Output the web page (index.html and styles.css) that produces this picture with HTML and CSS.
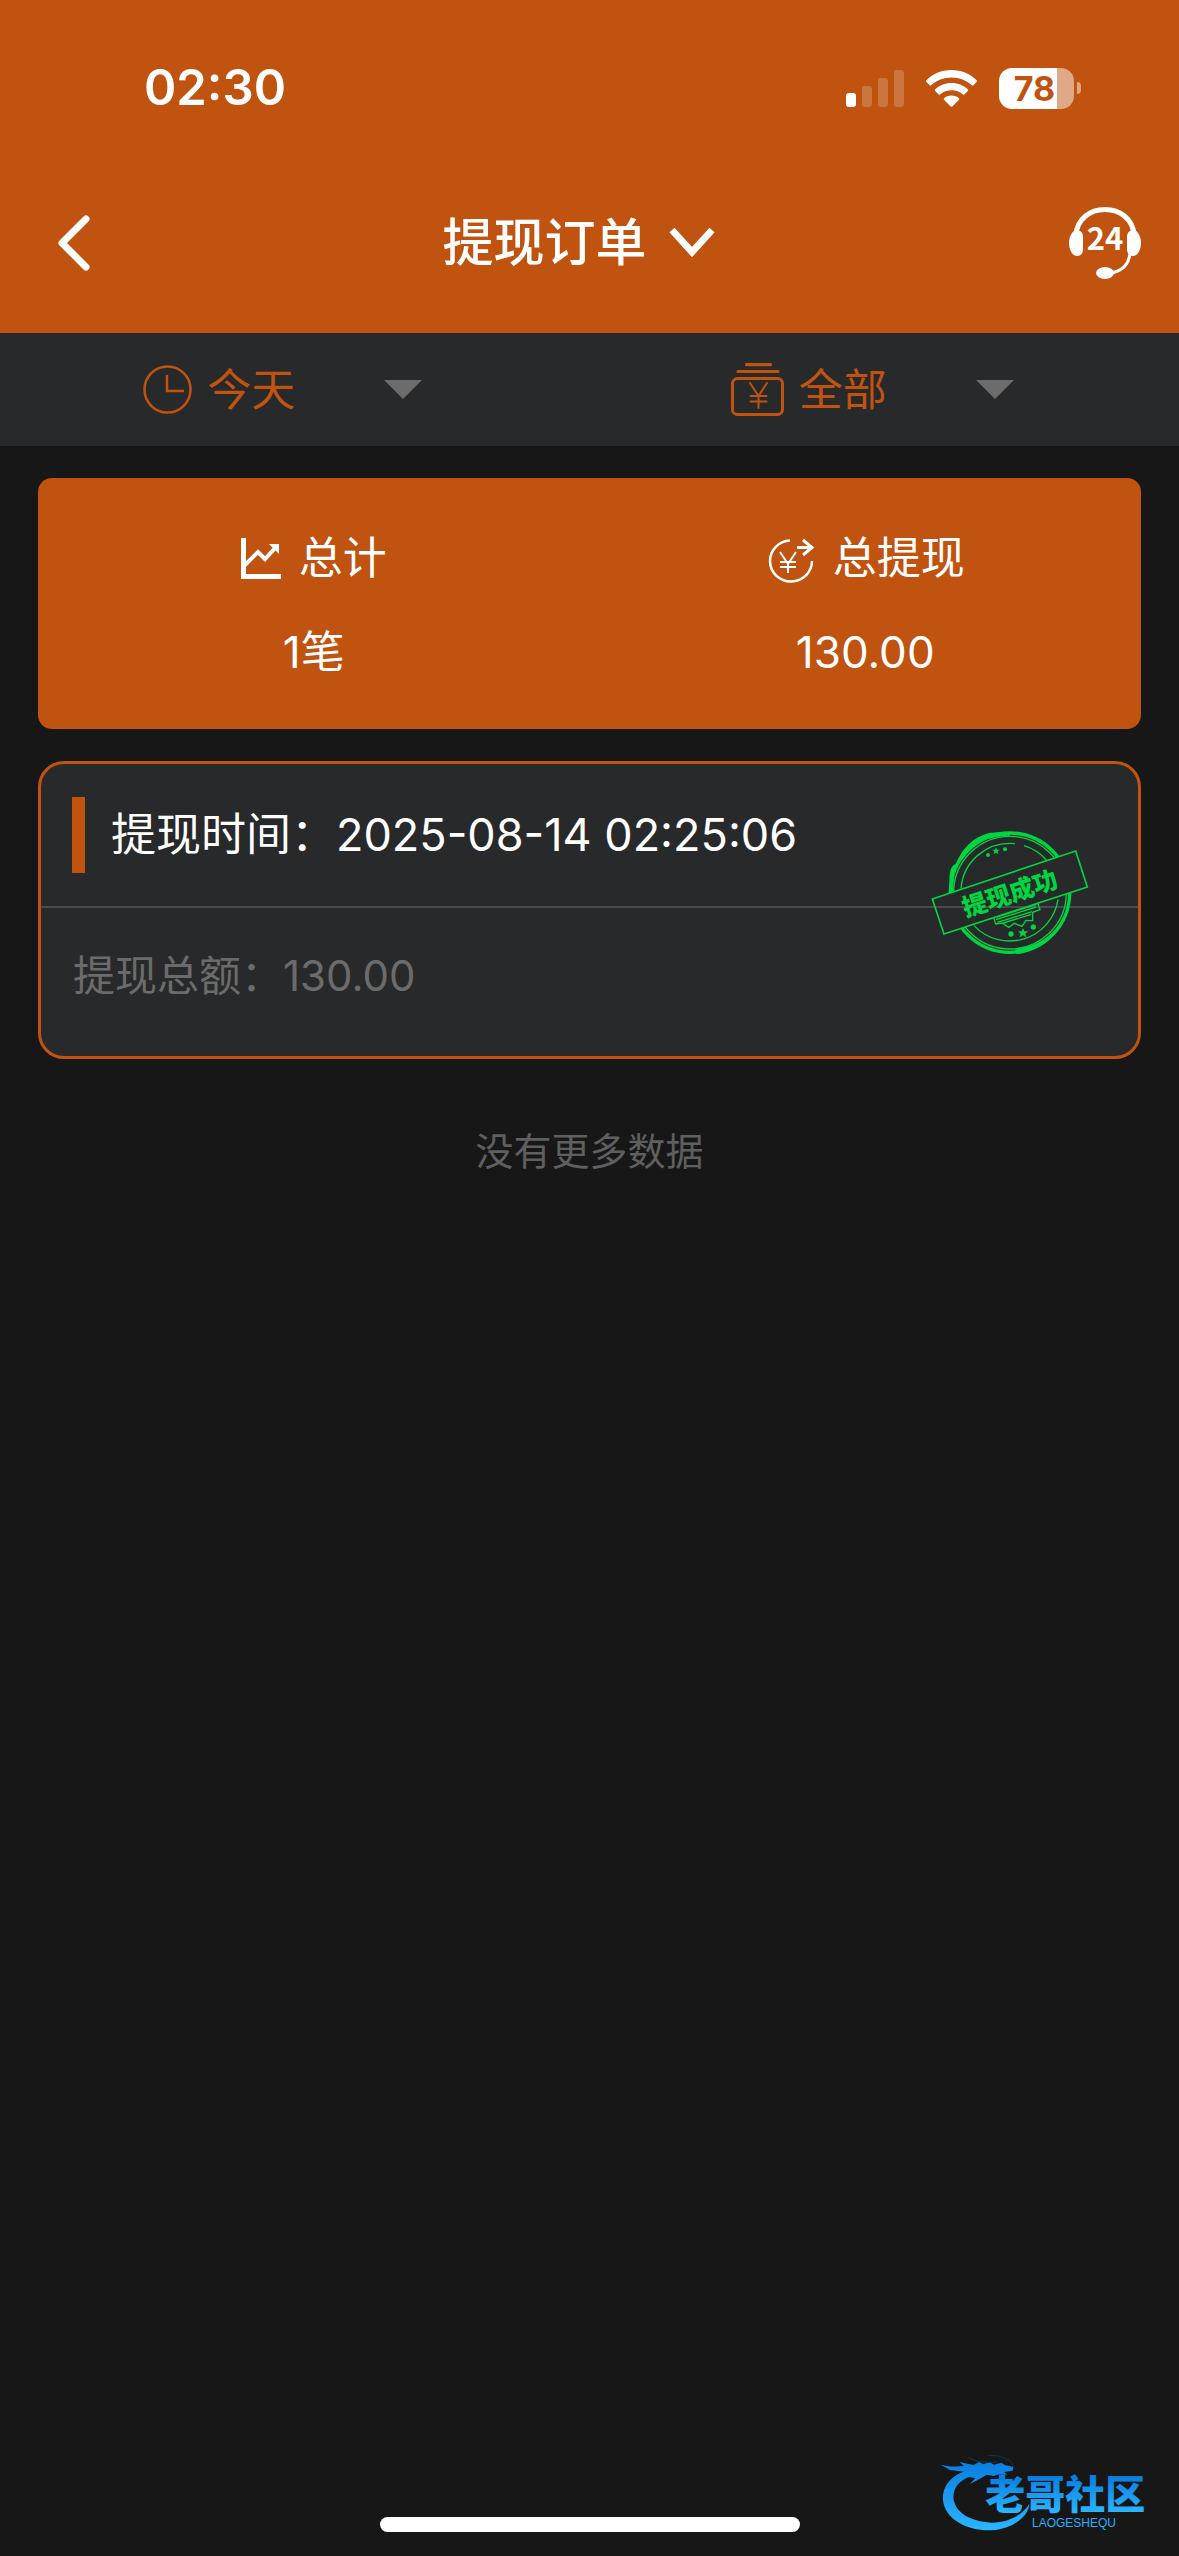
FILE: index.html
```html
<!DOCTYPE html>
<html lang="zh-CN">
<head>
  <meta charset="UTF-8">
  <meta name="viewport" content="width=device-width, initial-scale=1.0">
  <title>提现订单</title>
  <link rel="stylesheet" href="styles.css">
</head>
<body>
  <header class="header">
    <div class="status-bar">
      <span class="time">02:30</span>
      <div class="status-icons">
        <svg class="signal" width="58" height="37" viewBox="0 0 58 37">
          <rect x="0" y="23" width="10" height="14" rx="3"/>
          <rect class="dim" x="16" y="16" width="10" height="21" rx="3"/>
          <rect class="dim" x="32" y="8" width="10" height="29" rx="3"/>
          <rect class="dim" x="48" y="0" width="10" height="37" rx="3"/>
        </svg>
        <svg class="wifi" width="51" height="37" viewBox="0 0 51 37">
          <path d="M25.500 0C35.500 0 44.500 4 51 10.500Q51 11.500 50.500 12L47 15.500Q46.500 16 45.800 15.300C40.500 10.500 33.500 7.500 25.500 7.500S10.500 10.500 5.200 15.300Q4.500 16 4 15.500L.5 12Q0 11.500 0 10.500C6.500 4 15.500 0 25.500 0Z"/>
          <path d="M25.500 13C32 13 37.800 15.500 42 19.500Q42.500 20 42 20.800L38.300 24.500Q37.600 25 37 24.500C34 21.800 30 20.300 25.500 20.300S17 21.800 14 24.500Q13.400 25 12.700 24.500L9 20.800Q8.500 20 9 19.500C13.200 15.500 19 13 25.500 13Z"/>
          <path d="M25.500 25.500C28.500 25.500 31 26.500 33 28.200Q33.500 29 33 29.700L26.300 36.500Q25.500 37.200 24.700 36.500L18 29.700Q17.500 29 18 28.200C20 26.500 22.500 25.500 25.500 25.500Z"/>
        </svg>
        <div class="battery">
          <span class="battery-level">78</span>
          <span class="battery-tip"></span>
        </div>
      </div>
    </div>
    <nav class="nav">
      <button type="button" class="icon-btn back" aria-label="返回">
        <svg width="32" height="56" viewBox="0 0 32 56"><path d="M28 4 4 28l24 24" fill="none" stroke="#fff" stroke-width="7" stroke-linecap="round" stroke-linejoin="round"/></svg>
      </button>
      <h1>
        <button type="button" class="title-btn">
          提现订单
          <svg width="46" height="32" viewBox="0 0 46 32"><path d="M3 3l20 22L43 3" fill="none" stroke="#fff" stroke-width="7"/></svg>
        </button>
      </h1>
      <button type="button" class="icon-btn service" aria-label="24小时客服">
        <svg width="72" height="72" viewBox="0 0 72 72">
          <path d="M7 28C8 12 21 2.500 36 2.500S64 12 65 28" fill="none" stroke="#fff" stroke-width="5"/>
          <path d="M61 46C60 57 53 64 42 66" fill="none" stroke="#fff" stroke-width="3"/>
          <ellipse cx="36" cy="66" rx="9" ry="6" fill="#fff"/>
          <path d="M7 23C12 23 14 26 14 30V42C14 46 12 49 8 49C3 49 0 42 0 36S3 24 7 23Z" fill="#fff"/>
          <path d="M65 23C60 23 58 26 58 30V42C58 46 60 49 64 49C69 49 72 42 72 36S69 24 65 23Z" fill="#fff"/>
          <text class="service-text" x="36" y="43">24</text>
        </svg>
      </button>
    </nav>
  </header>

  <div class="filters">
    <label class="filter">
      <svg width="49" height="49" viewBox="0 0 49 49" fill="none" stroke="#bf530f">
        <circle cx="24.500" cy="24.500" r="23" stroke-width="2.500"/>
        <path d="M24 10v16h17" stroke-width="2.500"/>
      </svg>
      <select aria-label="日期">
        <option>今天</option>
      </select>
      <svg width="38" height="19" viewBox="0 0 38 19"><path d="M0 0h38L19 19z" fill="#6c6c6c"/></svg>
    </label>
    <label class="filter">
      <svg width="53" height="53" viewBox="0 0 53 53" fill="none" stroke="#bf530f" stroke-linecap="round">
        <path d="M15.500 1.700h24M7 8.500h40" stroke-width="3.200"/>
        <rect x="1.500" y="15.500" width="50" height="36" rx="5" stroke-width="3"/>
        <path d="M19 20l8.500 13L36 20M27.500 33v12M19.500 33h16M19.500 38.500h16" stroke-width="2"/>
      </svg>
      <select aria-label="类型">
        <option>全部</option>
      </select>
      <svg width="38" height="19" viewBox="0 0 38 19"><path d="M0 0h38L19 19z" fill="#6c6c6c"/></svg>
    </label>
  </div>

  <main class="content">
    <section class="summary">
      <div class="summary-item">
        <div class="summary-label">
          <svg width="40" height="41" viewBox="0 0 40 41">
            <path d="M0 0h5v36h35v5H0z" fill="#fff"/>
            <path d="M4 27l13-13 7 7L35 9" fill="none" stroke="#fff" stroke-width="4"/>
            <path d="M28 6h10v10z" fill="#fff"/>
          </svg>
          总计
        </div>
        <div class="summary-value">1笔</div>
      </div>
      <div class="summary-item">
        <div class="summary-label">
          <svg width="49" height="50" viewBox="0 -6 49 50" fill="none" stroke="#fff">
            <path d="M24 1.500A21 20.500 0 1 0 46 22" stroke-width="2.500"/>
            <path d="M31 8.500h15M37 1l9 7.500-9 7.500" stroke-width="3"/>
            <path d="M14 13l8 12 8-12M22 25v9M14 23h16M14 28h16" stroke-width="2"/>
          </svg>
          总提现
        </div>
        <div class="summary-value">130.00</div>
      </div>
    </section>

    <article class="order">
      <div class="order-time">提现时间：2025-08-14 02:25:06</div>
      <div class="order-amount">提现总额：130.00</div>
      <svg class="stamp" width="160" height="128" viewBox="90 85 480 384" fill="none" stroke="#00d542">
        <mask id="band">
          <rect x="90" y="85" width="480" height="384" fill="#fff" stroke="none"/>
          <path d="M97 298 527 154 562 262 132 403z" fill="#000" stroke="none"/>
        </mask>
        <g mask="url(#band)">
          <circle cx="330" cy="279" r="179" stroke-width="10"/>
          <circle cx="330" cy="279" r="169" stroke-width="4"/>
          <path d="M150 275C146 225 148 200 168 192C185 150 215 112 270 99L330 97V108C250 110 200 140 176 190C164 215 160 240 160 275Z" fill="#00d542" stroke="none"/>
          <path d="M345 450C400 440 440 425 490 365L506 310C500 390 430 455 350 464Z" fill="#00d542" stroke="none"/>
          <path d="M183 266A147 147 0 0 1 345 132M372 138A147 147 0 0 1 440 182M474 300A147 147 0 0 1 222 378" stroke-width="4"/>
          <path d="M280 350l7 23 19-3 20 13 17-12 23 9 12-18 20 1V338l22-8-8-22z" stroke-width="4"/>
          <path d="M288 360l120-38M290 352l120-38M292 368l104-32M310 370l84-26" stroke-width="4"/>
        </g>
        <path d="M97 298 527 154 562 262 132 403z" stroke-width="5"/>
        <g fill="#00d542" stroke="none">
          <path d="M288 143l3 7 8 0-6 5 2 8-7-4-7 4 2-8-6-5 8 0z"/>
          <circle cx="264" cy="166" r="6"/>
          <circle cx="315" cy="149" r="6"/>
          <path d="M369 385l4 10 11 0-8 7 3 11-10-6-10 6 3-11-8-7 11 0z"/>
          <circle cx="333" cy="403" r="8"/>
          <circle cx="400" cy="382" r="8"/>
          <text class="stamp-text" x="330" y="308" transform="rotate(-18 330 282)">提现成功</text>
        </g>
      </svg>
    </article>

    <p class="no-more">没有更多数据</p>
  </main>

  <footer class="footer">
    <div class="home-bar"></div>
    <svg class="logo" width="223" height="78" viewBox="60 40 669 234" fill="url(#blue)">
      <defs>
        <linearGradient id="blue" gradientUnits="userSpaceOnUse" x1="0" y1="70" x2="0" y2="265">
          <stop offset="0" stop-color="#0a7fe0"/>
          <stop offset="1" stop-color="#2bb4ff"/>
        </linearGradient>
        <linearGradient id="textBlue" gradientUnits="userSpaceOnUse" x1="0" y1="110" x2="0" y2="215">
          <stop offset="0" stop-color="#0a7fe0"/>
          <stop offset="1" stop-color="#2bb4ff"/>
        </linearGradient>
      </defs>
      <path d="M160 84C95 98 66 135 69 178C74 235 140 271 215 269C285 262 326 225 328 190C305 225 265 245 215 246C150 243 103 215 100 170C100 135 125 110 175 102Z"/>
      <path d="M62 72C85 78 105 78 132 76L118 64 160 73 178 64 190 71 208 64 222 72 244 66 256 74 280 78 278 90 252 94 262 102 240 100 222 106 200 102 180 114 150 130 166 112 140 108 158 96 120 92 90 88Z"/>
      <path d="M145 50C170 66 200 66 232 64M205 44C240 44 270 52 278 72" fill="none" stroke="#12364f" stroke-width="3"/>
      <text class="logo-name" x="196" y="206" fill="url(#textBlue)">老哥社区</text>
      <text class="logo-sub" x="336" y="258">LAOGESHEQU</text>
    </svg>
  </footer>
</body>
</html>
```

FILE: styles.css
```css
* {
  box-sizing: border-box;
}
body {
  margin: 0;
  min-height: 100vh;
  display: flex;
  flex-direction: column;
  background-color: #171717;
  color: #fff;
  font-family: Inter, "Noto Sans CJK SC", sans-serif;
  font-size: 44px;
  line-height: 60px;
}
button,
select {
  font: inherit;
  color: inherit;
  background: none;
  border: none;
  padding: 0;
  cursor: pointer;
}
svg {
  display: block;
  flex-shrink: 0;
}

/* header */
.header {
  background-color: #bf530f;
}
.status-bar {
  display: flex;
  align-items: center;
  justify-content: space-between;
  padding: 58px 98px 35px 144px;
}
.time {
  font-size: 49px;
  font-weight: 600;
}
.status-icons {
  display: flex;
  align-items: center;
  gap: 22px;
}
.status-icons svg {
  fill: #fff;
}
.status-icons .dim {
  opacity: 0.2;
}
.battery {
  display: flex;
  align-items: center;
  gap: 3px;
}
.battery-level {
  width: 75px;
  padding-right: 4px;
  border-radius: 13px;
  background: linear-gradient(to right, #fff 78%, rgba(255, 255, 255, 0.5) 78%);
  color: #bf530f;
  font-size: 34px;
  font-weight: 700;
  line-height: 41px;
  text-align: center;
}
.battery-tip {
  width: 4px;
  height: 12px;
  border-radius: 0 4px 4px 0;
  background-color: rgba(255, 255, 255, 0.5);
}
.nav {
  display: grid;
  grid-template-columns: 1fr auto 1fr;
  align-items: center;
  height: 180px;
  padding: 0 38px;
}
.back {
  justify-self: start;
  padding-left: 20px;
}
.service {
  justify-self: end;
}
.service-text {
  fill: #fff;
  font-family: "Noto Sans CJK SC", sans-serif;
  font-size: 31px;
  font-weight: 700;
  text-anchor: middle;
}
h1 {
  margin: 0;
  font-size: 51px;
  font-weight: 500;
}
.title-btn {
  display: flex;
  align-items: center;
  gap: 22px;
  padding-right: 22px;
}

/* filters */
.filters {
  display: grid;
  grid-template-columns: 1fr 1fr;
  background-color: #28292a;
}
.filter {
  display: flex;
  align-items: center;
  justify-content: center;
  gap: 15px;
  height: 113px;
  padding-right: 24px;
}
.filter select {
  appearance: none;
  width: 162px;
  color: #bf530f;
}

/* content */
.content {
  display: flex;
  flex-direction: column;
  gap: 32px;
  padding: 32px 38px;
}
.summary {
  display: grid;
  grid-template-columns: 1fr 1fr;
  padding: 50px 0 47px;
  border-radius: 14px;
  background-color: #bf530f;
}
.summary-item {
  display: flex;
  flex-direction: column;
  align-items: center;
  gap: 34px;
}
.summary-label {
  display: flex;
  align-items: center;
  gap: 18px;
}
.order {
  position: relative;
  border: 3px solid #bf530f;
  border-radius: 26px;
  background-color: #28292a;
}
.order-time {
  display: flex;
  align-items: center;
  gap: 26px;
  padding: 33px 31px;
  border-bottom: 2px solid #4a4b4c;
  font-size: 45px;
}
.order-time::before {
  content: "";
  width: 13px;
  height: 76px;
  background-color: #bf530f;
}
.order-amount {
  padding: 38px 32px 50px;
  color: #6b6b6b;
  font-size: 42px;
}
.stamp {
  position: absolute;
  top: 64px;
  right: 48px;
}
.stamp-text {
  font-family: "Noto Sans CJK SC", sans-serif;
  font-size: 74px;
  font-weight: 900;
  text-anchor: middle;
}
.no-more {
  margin: 30px 0;
  color: #5f5f5f;
  font-size: 38px;
  text-align: center;
}

/* footer */
.footer {
  position: relative;
  margin-top: auto;
  padding-bottom: 24px;
}
.home-bar {
  width: 420px;
  height: 15px;
  margin: 0 auto;
  border-radius: 8px;
  background-color: #fff;
}
.logo {
  position: absolute;
  right: 16px;
  bottom: 24px;
}
.logo-name {
  font-family: "Noto Sans CJK SC", sans-serif;
  font-size: 120px;
  font-weight: 900;
}
.logo-sub {
  font-family: "Liberation Sans", sans-serif;
  font-size: 36px;
}
```
